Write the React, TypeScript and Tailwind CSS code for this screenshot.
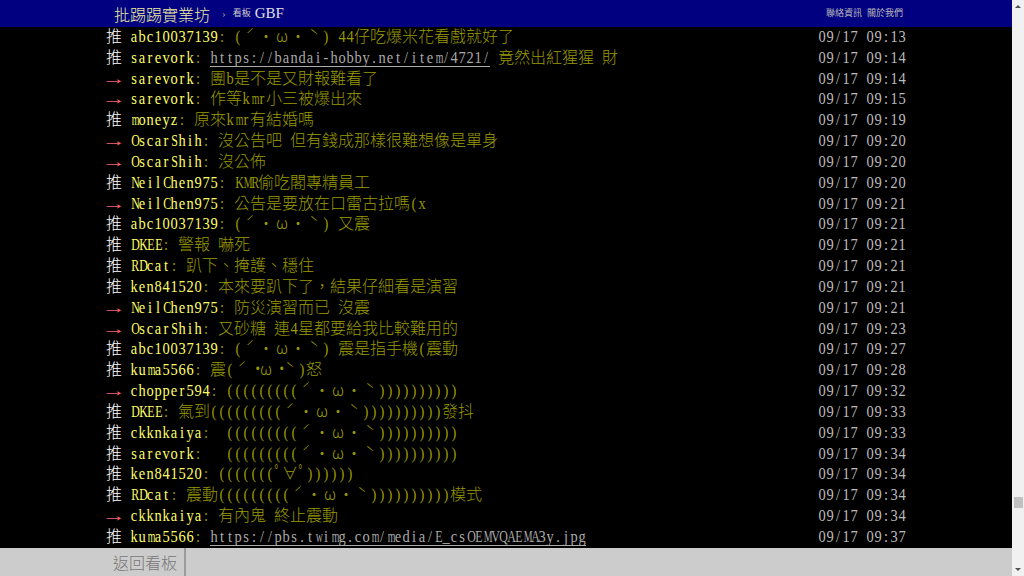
import React from 'react';

type Push = {
  tag: '推' | '→';
  user: string;
  text: string;
  link?: string;
  after?: string;
  time: string;
};

const KAO = '(((((((((ˊ・ω・ˋ))))))))))';

const PUSHES: Push[] = [
  { tag: '推', user: 'abc10037139', text: '(ˊ・ω・ˋ) 44仔吃爆米花看戲就好了', time: '09/17 09:13' },
  { tag: '推', user: 'sarevork', text: '', link: 'https://bandai-hobby.net/item/4721/', after: ' 竟然出紅猩猩 財', time: '09/17 09:14' },
  { tag: '→', user: 'sarevork', text: '團b是不是又財報難看了', time: '09/17 09:14' },
  { tag: '→', user: 'sarevork', text: '作等kmr小三被爆出來', time: '09/17 09:15' },
  { tag: '推', user: 'moneyz', text: '原來kmr有結婚嗎', time: '09/17 09:19' },
  { tag: '→', user: 'OscarShih', text: '沒公告吧 但有錢成那樣很難想像是單身', time: '09/17 09:20' },
  { tag: '→', user: 'OscarShih', text: '沒公佈', time: '09/17 09:20' },
  { tag: '推', user: 'NeilChen975', text: 'KMR偷吃閣專精員工', time: '09/17 09:20' },
  { tag: '→', user: 'NeilChen975', text: '公告是要放在口雷古拉嗎(x', time: '09/17 09:21' },
  { tag: '推', user: 'abc10037139', text: '(ˊ・ω・ˋ) 又震', time: '09/17 09:21' },
  { tag: '推', user: 'DKEE', text: '警報 嚇死', time: '09/17 09:21' },
  { tag: '推', user: 'RDcat', text: '趴下、掩護、穩住', time: '09/17 09:21' },
  { tag: '推', user: 'ken841520', text: '本來要趴下了，結果仔細看是演習', time: '09/17 09:21' },
  { tag: '→', user: 'NeilChen975', text: '防災演習而已 沒震', time: '09/17 09:21' },
  { tag: '→', user: 'OscarShih', text: '又砂糖 連4星都要給我比較難用的', time: '09/17 09:23' },
  { tag: '推', user: 'abc10037139', text: '(ˊ・ω・ˋ) 震是指手機(震動', time: '09/17 09:27' },
  { tag: '推', user: 'kuma5566', text: '震(ˊ‧ω‧ˋ)怒', time: '09/17 09:28' },
  { tag: '→', user: 'chopper594', text: KAO, time: '09/17 09:32' },
  { tag: '推', user: 'DKEE', text: '氣到' + KAO + '發抖', time: '09/17 09:33' },
  { tag: '推', user: 'ckknkaiya', text: ' ' + KAO, time: '09/17 09:33' },
  { tag: '推', user: 'sarevork', text: '  ' + KAO, time: '09/17 09:34' },
  { tag: '推', user: 'ken841520', text: '(((((((ﾟ∀ﾟ))))))', time: '09/17 09:34' },
  { tag: '推', user: 'RDcat', text: '震動' + KAO + '模式', time: '09/17 09:34' },
  { tag: '→', user: 'ckknkaiya', text: '有內鬼 終止震動', time: '09/17 09:34' },
  { tag: '推', user: 'kuma5566', text: '', link: 'https://pbs.twimg.com/media/E_csOEMVQAEMA3y.jpg', time: '09/17 09:37' },
];

const HALF = /[\x00-\x7f\uff61-\uff9f\u2027]/;

// squeeze the serif glyphs into the 8px half-width cell
function squeeze(ch: string) {
  if (/[mwMW@%]/.test(ch)) return 'scale-x-[0.58]';
  if (/[A-Z]/.test(ch)) return 'scale-x-[0.7]';
  return 'scale-x-[0.85]';
}

// fixed-pitch cells, like the MingLiU grid the board is drawn in
function Cells({ text }: { text: string }) {
  return (
    <>
      {Array.from(text).map((ch, i) =>
        HALF.test(ch) ? (
          <span key={i} className={`inline-block w-2 text-center text-[17px] leading-[16px] ${squeeze(ch)}`}>
            {ch}
          </span>
        ) : (
          <span key={i} className="inline-block w-4 text-center leading-[16px] font-light font-['Noto_Sans_CJK_TC',serif]">
            {ch}
          </span>
        )
      )}
    </>
  );
}

function Row({ p }: { p: Push }) {
  return (
    <div className="flex justify-between h-[20.84px] leading-[20.84px] whitespace-pre">
      <div>
        {p.tag === '推' ? (
          <span className="text-white">
            <Cells text="推 " />
          </span>
        ) : (
          <span className="text-[#f66]">
            <span className="inline-block w-4 text-center text-[16px] leading-[16px] scale-x-[1.5]">→</span>
            <Cells text=" " />
          </span>
        )}
        <span className="text-[#ff6]">
          <Cells text={p.user} />
        </span>
        <span className="text-[#990]">
          <Cells text={': ' + p.text} />
          {p.link && (
            <a className="inline-block leading-[16px] border-b border-[#aaa] text-[#aaa]">
              <Cells text={p.link} />
            </a>
          )}
          {p.after && <Cells text={p.after} />}
        </span>
      </div>
      <div className="text-[#bbb]">
        <Cells text={p.time} />
      </div>
    </div>
  );
}

function Scrollbar() {
  return (
    <div className="relative w-3 h-full bg-[#f1f1f1] flex flex-col items-center justify-between py-[5px]">
      <div className="w-0 h-0 border-x-[3px] border-x-transparent border-b-[3px] border-b-[#505050]" />
      <div className="absolute top-[497px] left-[2px] w-[9px] h-[11px] bg-[#c1c1c1]" />
      <div className="w-0 h-0 border-x-[3px] border-x-transparent border-t-[3px] border-t-[#505050]" />
    </div>
  );
}

export default function App() {
  return (
    <div className="flex w-[1024px] h-[576px] overflow-hidden font-['Liberation_Serif','Noto_Sans_CJK_TC',serif] text-[16px]">
      <div className="flex-1 flex flex-col min-w-0">
        <header className="h-[27px] shrink-0 bg-[#000080]">
          <div className="mx-auto w-[800px] h-full flex items-center justify-between">
            <div className="flex items-center pl-2">
              <span className="text-[#eeeea0] text-[16px] font-light font-['Noto_Sans_CJK_TC',serif]">批踢踢實業坊</span>
              <span className="ml-[12px] text-[#999] text-[11px]">›</span>
              <span className="ml-[7px] text-[#ccc] text-[9px]">看板</span>
              <span className="ml-[4px] text-[#e0e0e0] text-[15px]">GBF</span>
            </div>
            <div className="flex items-center gap-[5px] pr-[3px] text-[9px] text-[#bbb]">
              <span>聯絡資訊</span>
              <span>關於我們</span>
            </div>
          </div>
        </header>
        <main className="flex-1 bg-black overflow-hidden">
          <div className="mx-auto w-[800px]">
            {PUSHES.map((p, i) => (
              <Row key={i} p={p} />
            ))}
          </div>
        </main>
        <footer className="h-[28px] shrink-0 bg-[#cccccc]">
          <div className="mx-auto w-[800px] h-full flex">
            <div className="flex items-center px-[7px] border-r-2 border-[#9a9a9a] text-[#777] font-light font-['Noto_Sans_CJK_TC',serif]">
              返回看板
            </div>
          </div>
        </footer>
      </div>
      <Scrollbar />
    </div>
  );
}
